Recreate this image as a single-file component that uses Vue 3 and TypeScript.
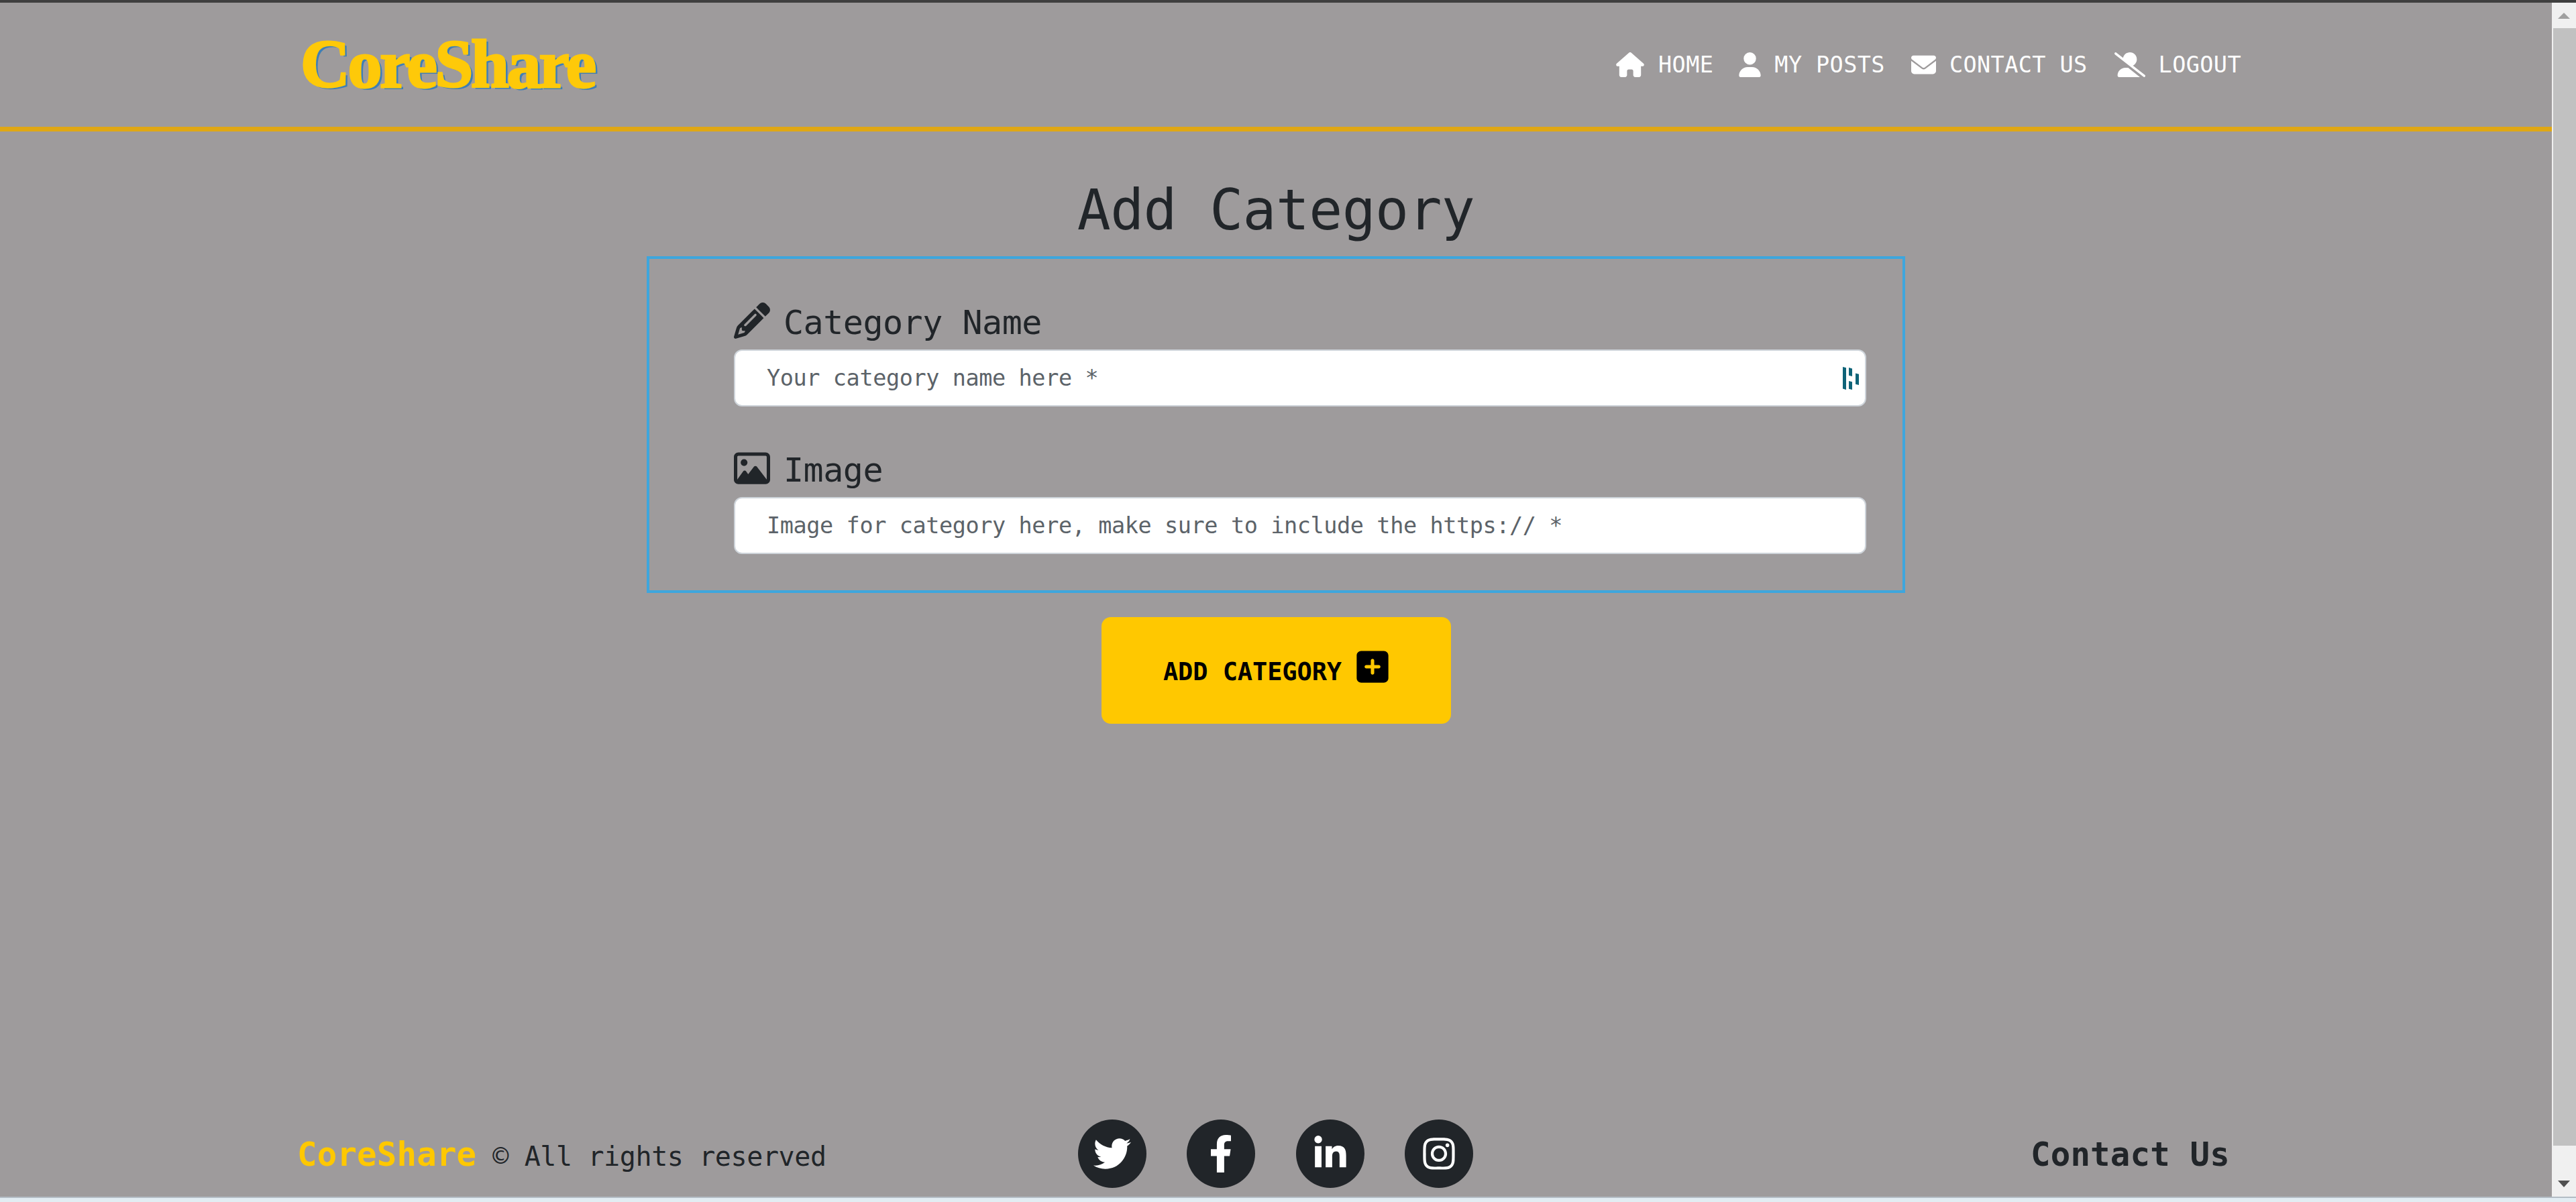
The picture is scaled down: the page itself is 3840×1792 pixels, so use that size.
<script setup lang="ts">
interface NavItem { label: string; vb: string; d: string; w: number; gap: number }
const nav: NavItem[] = [
  { label: 'HOME', vb: '0 0 576 512', w: 44, gap: 38, d: 'M575.8 255.5c0 18-15 32.1-32 32.1h-32l.7 160.2c0 2.7-.2 5.4-.5 8.1V472c0 22.1-17.9 40-40 40H456c-1.1 0-2.2 0-3.3-.1c-1.4 .1-2.8 .1-4.2 .1H416 392c-22.1 0-40-17.9-40-40V448 384c0-17.7-14.3-32-32-32H256c-17.7 0-32 14.3-32 32v64 24c0 22.1-17.9 40-40 40H160 128.1c-1.5 0-3-.1-4.5-.2c-1.2 .1-2.4 .2-3.6 .2H104c-22.1 0-40-17.9-40-40V360c0-.9 0-1.9 .1-2.8V287.6H32c-18 0-32-14-32-32.1c0-9 3-17 10-24L266.4 8c7-7 15-8 22-8s15 2 21 7L564.8 231.5c8 7 12 15 11 24z' },
  { label: 'MY POSTS', vb: '0 0 448 512', w: 33, gap: 39, d: 'M224 256A128 128 0 1 0 224 0a128 128 0 1 0 0 256zm-45.7 48C79.8 304 0 383.8 0 482.3C0 498.7 13.3 512 29.7 512H418.3c16.4 0 29.7-13.3 29.7-29.7C448 383.8 368.2 304 269.7 304H178.3z' },
  { label: 'CONTACT US', vb: '0 0 512 512', w: 37, gap: 40, d: 'M48 64C21.5 64 0 85.5 0 112c0 15.1 7.1 29.3 19.2 38.4L236.8 313.6c11.4 8.5 27 8.5 38.4 0L492.8 150.4c12.1-9.1 19.2-23.3 19.2-38.4c0-26.5-21.5-48-48-48H48zM0 176V384c0 35.3 28.7 64 64 64H448c35.3 0 64-28.7 64-64V176L294.4 339.2c-22.8 17.1-54 17.1-76.8 0L0 176z' },
  { label: 'LOGOUT', vb: '0 0 640 512', w: 46, gap: 0, d: 'M38.8 5.1C28.4-3.1 13.3-1.2 5.1 9.2S-1.2 34.7 9.2 42.9l592 464c10.4 8.2 25.5 6.3 33.7-4.1s6.3-25.5-4.1-33.7L381.9 274c48.5-23.2 82.1-72.7 82.1-130C464 64.5 399.5 0 320 0C250.4 0 192.4 49.3 178.9 114.9L38.8 5.1zM545.5 512H528L284.3 320h-59C136.2 320 64 392.2 64 481.3c0 17 13.8 30.7 30.7 30.7H545.3l.2 0z' },
]
interface Field { label: string; placeholder: string; d: string; dashlane: boolean }
const fields: Field[] = [
  { label: 'Category Name', placeholder: 'Your category name here *', dashlane: true, d: 'M410.3 231l11.3-11.3-33.9-33.9-62.1-62.1L291.7 89.8l-11.3 11.3-22.6 22.6L58.6 322.9c-10.4 10.4-18 23.3-22.2 37.4L1 480.7c-2.5 8.4-.2 17.5 6.1 23.7s15.3 8.5 23.7 6.1l120.3-35.4c14.1-4.2 27-11.8 37.4-22.2L387.7 253.7 410.3 231zM160 399.4l-9.1 22.7c-4 3.1-8.5 5.4-13.3 6.9L59.4 452l23-78.1c1.4-4.9 3.8-9.4 6.9-13.3l22.7-9.1v32c0 8.8 7.2 16 16 16h32zM362.7 18.7L348.3 33.2 325.7 55.8 314.3 67.1l33.9 33.9 62.1 62.1 33.9 33.9 11.3-11.3 22.6-22.6 14.5-14.5c25-25 25-65.5 0-90.5L453.3 18.7c-25-25-65.5-25-90.5 0zm-47.4 168l-144 144c-6.2 6.2-16.4 6.2-22.6 0s-6.2-16.4 0-22.6l144-144c6.2-6.2 16.4-6.2 22.6 0s6.2 16.4 0 22.6z' },
  { label: 'Image', placeholder: 'Image for category here, make sure to include the https:// *', dashlane: false, d: 'M448 80c8.8 0 16 7.2 16 16V415.8l-5-6.5-136-176c-4.5-5.9-11.6-9.3-19-9.3s-14.4 3.4-19 9.3L202 340.7l-30.5-42.7C167 291.7 159.8 288 152 288s-15 3.7-19.5 10.1l-80 112L48 416.3l0-.3V96c0-8.8 7.2-16 16-16H448zM64 32C28.7 32 0 60.7 0 96V416c0 35.3 28.7 64 64 64H448c35.3 0 64-28.7 64-64V96c0-35.3-28.7-64-64-64H64zm80 192a48 48 0 1 0 0-96 48 48 0 1 0 0 96z' },
]
const socials = [
  { name: 'Twitter', vb: '0 0 512 512', s: 56, d: 'M459.37 151.716c.325 4.548.325 9.097.325 13.645 0 138.72-105.583 298.558-298.558 298.558-59.452 0-114.68-17.219-161.137-47.106 8.447.974 16.568 1.299 25.34 1.299 49.055 0 94.213-16.568 130.274-44.832-46.132-.975-84.792-31.188-98.112-72.772 6.498.974 12.995 1.624 19.818 1.624 9.421 0 18.843-1.3 27.614-3.573-48.081-9.747-84.143-51.98-84.143-102.985v-1.299c13.969 7.797 30.214 12.67 47.431 13.319-28.264-18.843-46.781-51.005-46.781-87.391 0-19.492 5.197-37.36 14.294-52.954 51.655 63.675 129.3 105.258 216.365 109.807-1.624-7.797-2.599-15.918-2.599-24.04 0-57.828 46.782-104.934 104.934-104.934 30.213 0 57.502 12.67 76.67 33.137 23.715-4.548 46.456-13.32 66.599-25.34-7.798 24.366-24.366 44.833-46.132 57.827 21.117-2.273 41.584-8.122 60.426-16.243-14.292 20.791-32.161 39.308-52.628 54.253z' },
  { name: 'Facebook', vb: '0 0 320 512', s: 56, d: 'M279.14 288l14.22-92.66h-88.91v-60.13c0-25.35 12.42-50.06 52.24-50.06h40.42V6.26S260.43 0 225.36 0c-73.22 0-121.08 44.38-121.08 124.72v70.62H22.89V288h81.39v224h100.17V288z' },
  { name: 'LinkedIn', vb: '0 0 448 512', s: 54, d: 'M100.28 448H7.4V148.9h92.88zM53.79 108.1C24.09 108.1 0 83.5 0 53.8a53.79 53.79 0 0 1 107.58 0c0 29.7-24.1 54.3-53.79 54.3zM447.9 448h-92.68V302.4c0-34.7-.7-79.2-48.29-79.2-48.29 0-55.69 37.7-55.69 76.7V448h-92.78V148.9h89.08v40.8h1.3c12.4-23.5 42.69-48.3 87.88-48.3 94 0 111.28 61.9 111.28 142.3V448z' },
  { name: 'Instagram', vb: '0 0 448 512', s: 54, d: 'M224.1 141c-63.6 0-114.9 51.3-114.9 114.9s51.3 114.9 114.9 114.9S339 319.5 339 255.9 287.7 141 224.1 141zm0 189.6c-41.1 0-74.7-33.5-74.7-74.7s33.5-74.7 74.7-74.7 74.7 33.5 74.7 74.7-33.6 74.7-74.7 74.7zm146.4-194.3c0 14.9-12 26.8-26.8 26.8-14.9 0-26.8-12-26.8-26.8s12-26.8 26.8-26.8 26.8 12 26.8 26.8zm76.1 27.2c-1.7-35.9-9.9-67.7-36.2-93.9-26.2-26.2-58-34.4-93.9-36.2-37-2.1-147.9-2.1-184.9 0-35.8 1.7-67.6 9.9-93.9 36.1s-34.4 58-36.2 93.9c-2.1 37-2.1 147.9 0 184.9 1.7 35.9 9.9 67.7 36.2 93.9s58 34.4 93.9 36.2c37 2.1 147.9 2.1 184.9 0 35.9-1.7 67.7-9.9 93.9-36.2 26.2-26.2 34.4-58 36.2-93.9 2.1-37 2.1-147.8 0-184.8zM398.8 388c-7.8 19.6-22.9 34.7-42.6 42.6-29.5 11.7-99.5 9-132.1 9s-102.7 2.6-132.1-9c-19.6-7.8-34.7-22.9-42.6-42.6-11.7-29.5-9-99.5-9-132.1s-2.6-102.7 9-132.1c7.8-19.6 22.9-34.7 42.6-42.6 29.5-11.7 99.5-9 132.1-9s102.7-2.6 132.1 9c19.6 7.8 34.7 22.9 42.6 42.6 11.7 29.5 9 99.5 9 132.1s2.7 102.7-9 132.1z' },
]
</script>

<template>
  <div class="window">
    <div class="topbar"></div>
    <div class="middle">
      <div class="page">
        <header class="header">
          <div class="logo">CoreShare</div>
          <nav class="nav">
            <a v-for="n in nav" :key="n.label" class="nav-item" :style="{ marginRight: n.gap + 'px' }">
              <svg :viewBox="n.vb" :width="n.w" height="37" preserveAspectRatio="xMidYMid meet"><path :d="n.d" fill="#fff" /></svg>
              <span>{{ n.label }}</span>
            </a>
          </nav>
        </header>

        <main class="main">
          <h1 class="title">Add Category</h1>
          <form class="box" @submit.prevent>
            <div v-for="f in fields" :key="f.label" class="field">
              <label class="label">
                <svg viewBox="0 0 512 512" width="54" height="54"><path :d="f.d" fill="#212529" /></svg>
                <span>{{ f.label }}</span>
              </label>
              <div class="input-wrap">
                <input class="input" type="text" :placeholder="f.placeholder" />
                <svg v-if="f.dashlane" class="dashlane" viewBox="0 0 24 34" width="24" height="34">
                  <path d="M0 0l5 1.2V34l-5-1.4z M9 1l5 1.4V14l-5-1.2z M9 21l5 1.2V34l-5-1.2z M19 9.5l5 1.3V27l-5-1.2z" fill="#0e6378" />
                </svg>
              </div>
            </div>
          </form>
          <button class="submit" type="submit">
            <span class="submit-text">ADD CATEGORY</span>
            <svg viewBox="0 0 448 512" width="48" height="54"><path d="M64 32C28.7 32 0 60.7 0 96V416c0 35.3 28.7 64 64 64H384c35.3 0 64-28.7 64-64V96c0-35.3-28.7-64-64-64H64zM200 344V280H136c-13.3 0-24-10.7-24-24s10.7-24 24-24h64V168c0-13.3 10.7-24 24-24s24 10.7 24 24v64h64c13.3 0 24 10.7 24 24s-10.7 24-24 24H248v64c0 13.3-10.7 24-24 24s-24-10.7-24-24z" fill="#000" /></svg>
          </button>
        </main>

        <footer class="footer">
          <div class="copy"><span class="brand">CoreShare</span><span class="rights">© All rights reserved</span></div>
          <div class="socials">
            <a v-for="s in socials" :key="s.name" class="social" :aria-label="s.name">
              <svg :viewBox="s.vb" :width="s.s" :height="s.s"><path :d="s.d" fill="#fff" /></svg>
            </a>
          </div>
          <div class="contact">Contact Us</div>
        </footer>
      </div>
      <aside class="scrollbar">
        <div class="arrow up"></div>
        <div class="track"><div class="thumb"></div></div>
        <div class="arrow down"></div>
      </aside>
    </div>
    <div class="strip"></div>
  </div>
</template>

<style scoped>
.window {
  width: 3840px;
  height: 1792px;
  display: flex;
  flex-direction: column;
  overflow: hidden;
  font-family: "DejaVu Sans Mono", monospace;
  color: #212529;
}
.topbar { height: 4px; background: #3f3f3f; flex: none; }
.middle { flex: 1; display: flex; min-height: 0; }
.page {
  flex: 1;
  background: #9e9b9c;
  display: flex;
  flex-direction: column;
}
.header {
  height: 192px;
  box-sizing: border-box;
  border-bottom: 7px solid #e0a714;
  padding: 0 463px 0 448px;
  display: flex;
  align-items: center;
  justify-content: space-between;
  flex: none;
}
.logo {
  font-family: "Liberation Serif", serif;
  font-weight: 700;
  font-size: 102px;
  line-height: 1;
  letter-spacing: -3.2px;
  color: #fec909;
  -webkit-text-stroke: 3px #fec909;
  text-shadow: 4px 3px 0 #3f7fb5;
  margin-top: -2px;
}
.nav { display: flex; align-items: center; }
.nav-item {
  display: flex;
  align-items: center;
  gap: 20px;
  font-size: 33.5px;
  letter-spacing: 0.4px;
  color: #fff;
  line-height: 37px;
}
.main { display: flex; flex-direction: column; align-items: center; flex: none; }
.title {
  margin: 64px 0 0;
  height: 122px;
  font-size: 83px;
  font-weight: 400;
  letter-spacing: -0.6px;
  line-height: 108px;
}
.box {
  width: 1876px;
  box-sizing: border-box;
  border: 4px solid #3ea6dd;
  padding: 0 54px 54px 126px;
}
.field { padding-top: 65px; }
.label {
  display: flex;
  align-items: flex-start;
  gap: 20px;
  height: 70px;
  font-size: 50px;
  letter-spacing: -0.5px;
  line-height: 60px;
}
.label svg { flex: none; }
.input-wrap { position: relative; }
.input {
  display: block;
  width: 100%;
  height: 85px;
  box-sizing: border-box;
  border: 2px solid #ced4da;
  border-radius: 12px;
  background: #fff;
  padding: 0 47px;
  font-family: "DejaVu Sans Mono", monospace;
  font-size: 33.5px;
  letter-spacing: -0.4px;
  outline: none;
}
.input::placeholder { color: #5c6369; opacity: 1; }
.dashlane { position: absolute; right: 11px; top: 26px; }
.submit {
  margin-top: 36px;
  width: 521px;
  height: 159px;
  border: none;
  border-radius: 14px;
  background: #ffc800;
  color: #000;
  font-family: "DejaVu Sans Mono", monospace;
  font-weight: 700;
  font-size: 37px;
  letter-spacing: -0.1px;
  display: flex;
  align-items: center;
  justify-content: center;
  gap: 22px;
  padding: 0;
}
.submit-text { padding-top: 3px; }
.submit svg { margin-top: -12px; }
.footer {
  margin-top: auto;
  padding: 0 0 13px 443px;
  display: grid;
  grid-template-columns: 1164px 589px 1fr;
  align-items: center;
}
.copy { display: flex; align-items: baseline; gap: 24px; white-space: nowrap; margin-top: 2px; }
.brand { font-size: 49px; font-weight: 700; letter-spacing: 0.2px; color: #ffc800; }
.rights { font-size: 40px; letter-spacing: -0.4px; }
.socials { display: flex; justify-content: space-between; }
.social {
  width: 102px;
  height: 102px;
  border-radius: 50%;
  background: #212529;
  display: flex;
  align-items: center;
  justify-content: center;
}
.contact {
  padding-left: 831px;
  font-size: 49px;
  font-weight: 700;
  letter-spacing: 0.2px;
  margin-top: 2px;
}
.scrollbar {
  width: 36px;
  flex: none;
  background: #f0f0f0;
  display: flex;
  flex-direction: column;
  align-items: center;
  position: relative;
}
.arrow { width: 36px; height: 38px; flex: none; position: relative; }
.arrow::after {
  content: "";
  position: absolute;
  left: 9px;
  border-left: 9px solid transparent;
  border-right: 9px solid transparent;
}
.arrow.up::after { top: 15px; border-bottom: 9px solid #a0a0a0; }
.arrow.down::after { top: 14px; border-top: 10px solid #505050; }
.track { flex: 1; width: 100%; display: flex; justify-content: flex-end; }
.thumb { width: 34px; height: 1666px; background: #c1c1c1; }
.strip {
  height: 8px;
  flex: none;
  background: linear-gradient(#b3bcc4 0 2px, #e2edf3 2px);
}
</style>

<style>
html, body { margin: 0; padding: 0; overflow: hidden; }
</style>
